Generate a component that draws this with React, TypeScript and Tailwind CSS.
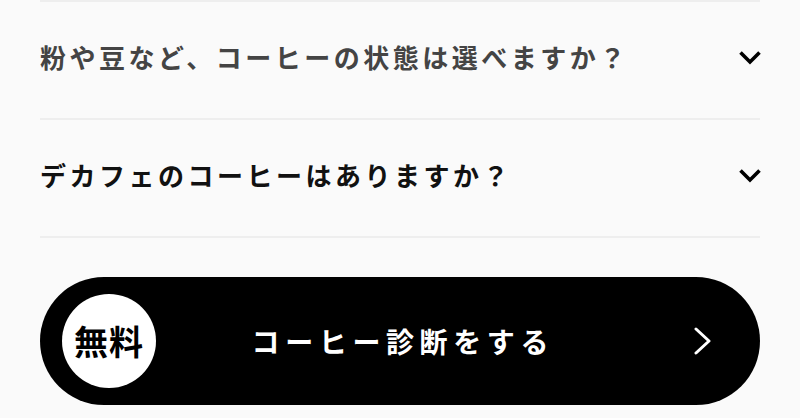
const faqs = [
  { q: '粉や豆など、コーヒーの状態は選べますか？', tone: 'text-[#444444]' },
  { q: 'デカフェのコーヒーはありますか？', tone: 'text-[#111111]' },
]

function ChevronDown() {
  return (
    <svg width="24" height="15" viewBox="0 0 24 15" fill="none">
      <polyline points="2.5,2.5 12,12 21.5,2.5" stroke="#000" strokeWidth="3.6" strokeLinejoin="miter" />
    </svg>
  )
}

function ChevronRight() {
  return (
    <svg width="18" height="28" viewBox="0 0 18 28" fill="none">
      <polyline points="2,2 15,14 2,26" stroke="#fff" strokeWidth="3" strokeLinecap="round" strokeLinejoin="round" />
    </svg>
  )
}

export default function App() {
  return (
    <div
      className="w-[800px] h-[418px] overflow-hidden bg-[#fafafa] px-10"
      style={{ fontFamily: '"Noto Sans CJK JP", "Noto Sans", sans-serif' }}
    >
      <div className="h-[2px] bg-[#eeeeee]" />
      {faqs.map(item => (
        <div
          key={item.q}
          className="h-[118px] border-b-2 border-[#eeeeee] flex items-center justify-between pb-[6px]"
        >
          <p className={`text-[26px] font-bold tracking-[3.5px] leading-none ${item.tone}`}>{item.q}</p>
          <span className="mr-[-2px]">
            <ChevronDown />
          </span>
        </div>
      ))}

      <button className="mt-[39px] w-full h-[128px] rounded-full bg-black grid grid-cols-[1fr_auto_1fr] items-center px-[22px]">
        <span className="flex">
          <span className="w-[94px] h-[94px] rounded-full bg-white flex items-center justify-center text-[34px] font-bold tracking-[1px] text-black leading-none">
            無料
          </span>
        </span>
        <span className="text-[28px] font-bold tracking-[0.2em] pl-[0.2em] text-white leading-none">
          コーヒー診断をする
        </span>
        <span className="flex justify-end pr-[26px]">
          <ChevronRight />
        </span>
      </button>
    </div>
  )
}
